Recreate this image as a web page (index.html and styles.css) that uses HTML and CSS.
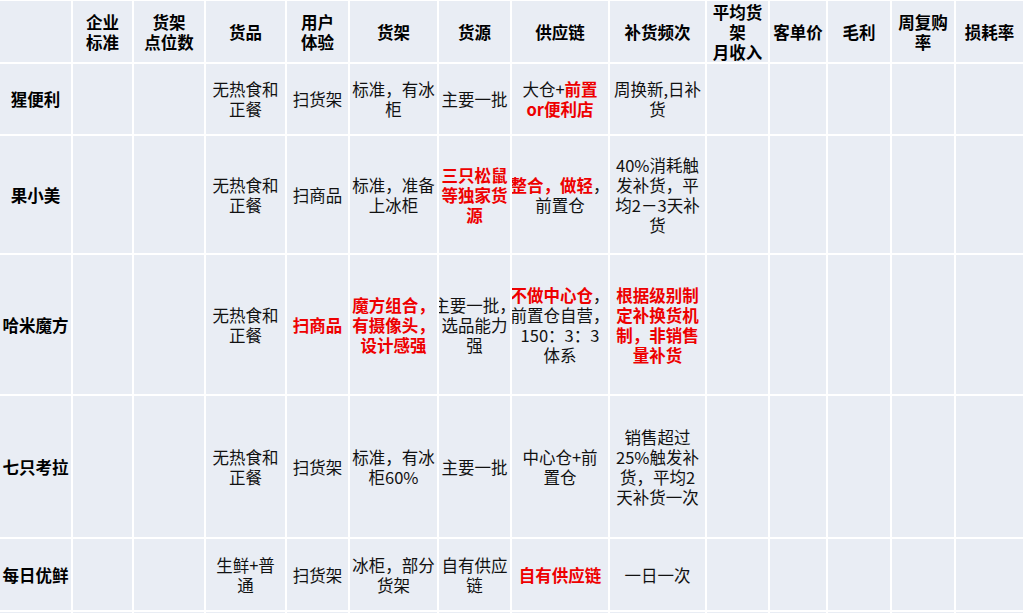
FILE: index.html
```html
<!DOCTYPE html>
<html lang="zh-CN">
<head>
<meta charset="utf-8">
<title>无人货架对比</title>
<link rel="stylesheet" href="styles.css">
</head>
<body>
<div class="table">
  <div class="cell head"></div>
  <div class="cell head"><div class="txt">企业<br>标准</div></div>
  <div class="cell head"><div class="txt">货架<br>点位数</div></div>
  <div class="cell head"><div class="txt">货品</div></div>
  <div class="cell head"><div class="txt">用户<br>体验</div></div>
  <div class="cell head"><div class="txt">货架</div></div>
  <div class="cell head"><div class="txt">货源</div></div>
  <div class="cell head"><div class="txt">供应链</div></div>
  <div class="cell head"><div class="txt">补货频次</div></div>
  <div class="cell head"><div class="txt">平均货<br>架<br>月收入</div></div>
  <div class="cell head"><div class="txt">客单价</div></div>
  <div class="cell head"><div class="txt">毛利</div></div>
  <div class="cell head"><div class="txt">周复购<br>率</div></div>
  <div class="cell head"><div class="txt">损耗率</div></div>

  <div class="cell name"><div class="txt">猩便利</div></div>
  <div class="cell"></div>
  <div class="cell"></div>
  <div class="cell"><div class="txt">无热食和<br>正餐</div></div>
  <div class="cell"><div class="txt">扫货架</div></div>
  <div class="cell"><div class="txt">标准，有冰<br>柜</div></div>
  <div class="cell"><div class="txt">主要一批</div></div>
  <div class="cell"><div class="txt">大仓+<span class="red">前置</span><br><span class="red">or便利店</span></div></div>
  <div class="cell"><div class="txt">周换新,日补<br>货</div></div>
  <div class="cell"></div>
  <div class="cell"></div>
  <div class="cell"></div>
  <div class="cell"></div>
  <div class="cell"></div>

  <div class="cell name"><div class="txt">果小美</div></div>
  <div class="cell"></div>
  <div class="cell"></div>
  <div class="cell"><div class="txt">无热食和<br>正餐</div></div>
  <div class="cell"><div class="txt">扫商品</div></div>
  <div class="cell"><div class="txt">标准，准备<br>上冰柜</div></div>
  <div class="cell"><div class="txt red">三只松鼠<br>等独家货<br>源</div></div>
  <div class="cell"><div class="txt"><span class="red">整合，做轻</span>，<br>前置仓</div></div>
  <div class="cell"><div class="txt">40%消耗触<br>发补货，平<br>均2－3天补<br>货</div></div>
  <div class="cell"></div>
  <div class="cell"></div>
  <div class="cell"></div>
  <div class="cell"></div>
  <div class="cell"></div>

  <div class="cell name"><div class="txt">哈米魔方</div></div>
  <div class="cell"></div>
  <div class="cell"></div>
  <div class="cell"><div class="txt">无热食和<br>正餐</div></div>
  <div class="cell"><div class="txt red">扫商品</div></div>
  <div class="cell"><div class="txt red">魔方组合，<br>有摄像头，<br>设计感强</div></div>
  <div class="cell"><div class="txt">主要一批，<br>选品能力<br>强</div></div>
  <div class="cell"><div class="txt"><span class="red">不做中心仓</span>，<br>前置仓自营，<br>150：3：3<br>体系</div></div>
  <div class="cell"><div class="txt red">根据级别制<br>定补换货机<br>制，非销售<br>量补货</div></div>
  <div class="cell"></div>
  <div class="cell"></div>
  <div class="cell"></div>
  <div class="cell"></div>
  <div class="cell"></div>

  <div class="cell name"><div class="txt">七只考拉</div></div>
  <div class="cell"></div>
  <div class="cell"></div>
  <div class="cell"><div class="txt">无热食和<br>正餐</div></div>
  <div class="cell"><div class="txt">扫货架</div></div>
  <div class="cell"><div class="txt">标准，有冰<br>柜60%</div></div>
  <div class="cell"><div class="txt">主要一批</div></div>
  <div class="cell"><div class="txt">中心仓+前<br>置仓</div></div>
  <div class="cell"><div class="txt">销售超过<br>25%触发补<br>货，平均2<br>天补货一次</div></div>
  <div class="cell"></div>
  <div class="cell"></div>
  <div class="cell"></div>
  <div class="cell"></div>
  <div class="cell"></div>

  <div class="cell name"><div class="txt">每日优鲜</div></div>
  <div class="cell"></div>
  <div class="cell"></div>
  <div class="cell"><div class="txt">生鲜+普<br>通</div></div>
  <div class="cell"><div class="txt">扫货架</div></div>
  <div class="cell"><div class="txt">冰柜，部分<br>货架</div></div>
  <div class="cell"><div class="txt">自有供应<br>链</div></div>
  <div class="cell"><div class="txt red">自有供应链</div></div>
  <div class="cell"><div class="txt">一日一次</div></div>
  <div class="cell"></div>
  <div class="cell"></div>
  <div class="cell"></div>
  <div class="cell"></div>
  <div class="cell"></div>

  <div class="cell"></div>
  <div class="cell"></div>
  <div class="cell"></div>
  <div class="cell"></div>
  <div class="cell"></div>
  <div class="cell"></div>
  <div class="cell"></div>
  <div class="cell"></div>
  <div class="cell"></div>
  <div class="cell"></div>
  <div class="cell"></div>
  <div class="cell"></div>
  <div class="cell"></div>
  <div class="cell"></div>
</div>
</body>
</html>
```

FILE: styles.css
```css
html, body {
  margin: 0;
  padding: 0;
  background: #ffffff;
  overflow: hidden;
  width: 1023px;
  height: 613px;
}

.table {
  display: grid;
  grid-template-columns: 71px 59px 70px 79px 61px 87px 71px 96px 95px 61px 56px 62px 62px 1fr;
  grid-template-rows: 61px 70px 117px 139px 141px 71px 30px;
  gap: 2px;
  padding-top: 1px;
  background: #ffffff;
  font-family: "Noto Sans CJK SC", "Noto Sans", sans-serif;
  font-size: 16.5px;
  line-height: 20px;
  color: #111111;
}

.cell {
  background: #e9edf4;
  display: flex;
  align-items: center;
  justify-content: center;
  overflow: hidden;
  min-width: 0;
}

.txt {
  white-space: nowrap;
  text-align: center;
  flex: none;
}

.head .txt,
.name .txt {
  font-weight: 700;
  color: #000000;
}

.red {
  color: #ee0000;
  font-weight: 700;
}
```
